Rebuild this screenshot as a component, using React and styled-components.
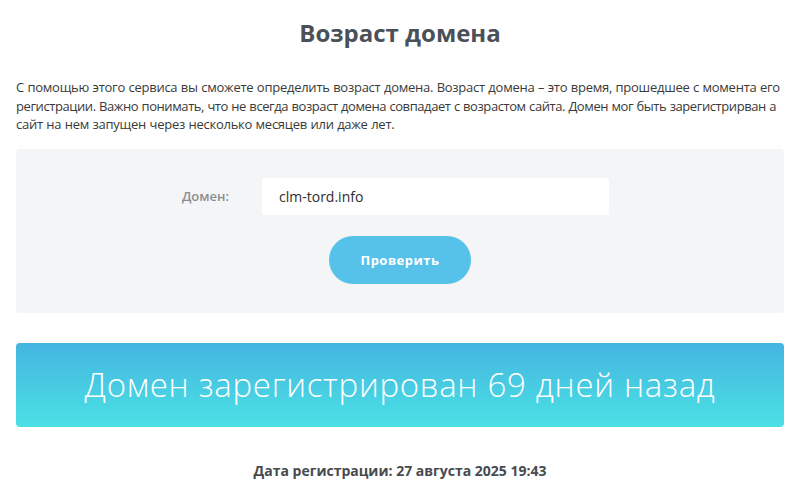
import React from 'react'
import styled, { createGlobalStyle } from 'styled-components'

const GlobalStyle = createGlobalStyle`
  body {
    margin: 0;
    background: #fff;
    font-family: "Open Sans", "Liberation Sans", sans-serif;
  }
`

const Page = styled.div`
  padding: 0 16px;
`
const Title = styled.h1`
  margin: 0;
  padding-top: 19px;
  font-size: 24px;
  font-weight: 700;
  line-height: 28px;
  text-align: center;
  color: #4b5058;
`
const Intro = styled.p`
  margin: 31px 0 0;
  font-size: 13px;
  line-height: 18.5px;
  word-spacing: 0.4px;
  color: #3a3a3a;
`
const IntroLine = styled.span`
  display: block;
  white-space: nowrap;
  letter-spacing: ${p => p.$spacing}px;
`
const Panel = styled.div`
  margin-top: 15px;
  height: 164px;
  box-sizing: border-box;
  padding-top: 29px;
  background: #f4f5f7;
  border-radius: 4px;
  display: flex;
  flex-direction: column;
  align-items: center;
`
const Row = styled.div`
  display: flex;
  align-items: center;
  gap: 33px;
  margin-right: 9px;
`
const Label = styled.label`
  font-size: 13px;
  font-weight: 600;
  color: #8a8d91;
`
const Input = styled.input`
  width: 347px;
  height: 37px;
  box-sizing: border-box;
  border: none;
  border-radius: 2px;
  background: #fff;
  padding: 0 17px;
  font-family: inherit;
  font-size: 14px;
  font-weight: 500;
  color: #2e2e2e;
  outline: none;
`
const Button = styled.button`
  margin-top: 21px;
  width: 142px;
  height: 48px;
  border: none;
  border-radius: 24px;
  background: #56c2ea;
  color: #fff;
  font-family: inherit;
  font-size: 13px;
  font-weight: 700;
  letter-spacing: 0.5px;
  cursor: pointer;
`
const Result = styled.div`
  margin-top: 30px;
  height: 84px;
  border-radius: 4px;
  background: linear-gradient(180deg, #45b5e1 0%, #4ae1e4 100%);
  display: flex;
  align-items: center;
  justify-content: center;
  color: #fff;
  font-size: 33px;
  font-weight: 300;
  letter-spacing: 0.7px;
`
const DateLine = styled.div`
  margin-top: 34px;
  text-align: center;
  font-size: 14px;
  font-weight: 700;
  color: #474b50;
`

export default function App() {
  return (
    <>
      <GlobalStyle />
      <Page>
        <Title>Возраст домена</Title>
        <Intro>
          <IntroLine $spacing={-0.26}>С помощью этого сервиса вы сможете определить возраст домена. Возраст домена – это время, прошедшее с момента его</IntroLine>
          <IntroLine $spacing={-0.42}>регистрации. Важно понимать, что не всегда возраст домена совпадает с возрастом сайта. Домен мог быть зарегистрирван а</IntroLine>
          <IntroLine $spacing={-0.26}>сайт на нем запущен через несколько месяцев или даже лет.</IntroLine>
        </Intro>
        <Panel>
          <Row>
            <Label htmlFor="domain">Домен:</Label>
            <Input id="domain" defaultValue="clm-tord.info" />
          </Row>
          <Button>Проверить</Button>
        </Panel>
        <Result>Домен зарегистрирован 69 дней назад</Result>
        <DateLine>Дата регистрации: 27 августа 2025 19:43</DateLine>
      </Page>
    </>
  )
}
